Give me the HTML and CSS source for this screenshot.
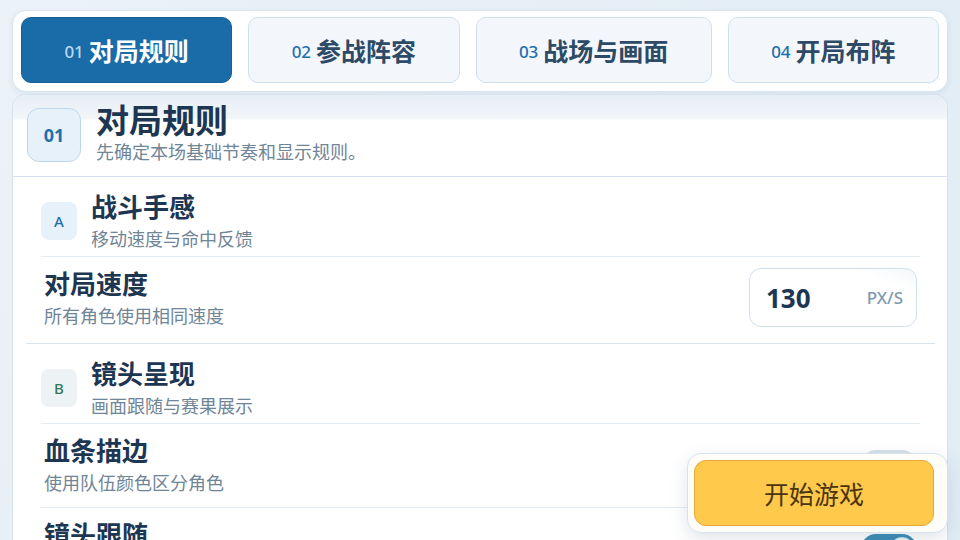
FILE: index.html
```html
<!DOCTYPE html>
<html lang="zh-CN">
<head>
<meta charset="utf-8">
<title>对局设置</title>
<link rel="stylesheet" href="styles.css">
</head>
<body>
<nav class="tabs">
  <a class="tab is-active"><span class="tab-num">01</span><span class="tab-label">对局规则</span></a>
  <a class="tab"><span class="tab-num">02</span><span class="tab-label">参战阵容</span></a>
  <a class="tab"><span class="tab-num">03</span><span class="tab-label">战场与画面</span></a>
  <a class="tab"><span class="tab-num">04</span><span class="tab-label">开局布阵</span></a>
</nav>

<main class="panel">
  <header class="panel-head">
    <div class="step-badge">01</div>
    <div class="head-text">
      <h1 class="panel-title">对局规则</h1>
      <p class="panel-sub">先确定本场基础节奏和显示规则。</p>
    </div>
  </header>

  <div class="panel-body">
    <section class="group">
      <div class="group-head">
        <div class="group-badge group-badge--blue">A</div>
        <div class="text-block">
          <h2 class="label">战斗手感</h2>
          <p class="hint">移动速度与命中反馈</p>
        </div>
      </div>
      <div class="row">
        <div class="text-block">
          <h3 class="label">对局速度</h3>
          <p class="hint">所有角色使用相同速度</p>
        </div>
        <div class="num-field"><span class="num-value">130</span><span class="num-unit">PX/S</span></div>
      </div>
    </section>

    <section class="group">
      <div class="group-head">
        <div class="group-badge group-badge--green">B</div>
        <div class="text-block">
          <h2 class="label">镜头呈现</h2>
          <p class="hint">画面跟随与赛果展示</p>
        </div>
      </div>
      <div class="row">
        <div class="text-block">
          <h3 class="label">血条描边</h3>
          <p class="hint">使用队伍颜色区分角色</p>
        </div>
        <span class="switch"><span class="knob"></span></span>
      </div>
      <div class="row">
        <div class="text-block">
          <h3 class="label">镜头跟随</h3>
          <p class="hint">镜头始终跟随当前角色</p>
        </div>
        <span class="switch is-on"><span class="knob"></span></span>
      </div>
    </section>
  </div>
</main>

<div class="start-dock">
  <button class="start-btn" type="button">开始游戏</button>
</div>
</body>
</html>
```

FILE: styles.css
```css
* { box-sizing: border-box; }

html, body { height: 540px; overflow: hidden; }

body {
  margin: 0;
  padding: 10px 12px 0;
  background: linear-gradient(120deg, #ebf2f8 0%, #e4eef6 60%, #e1ecf5 100%);
  font-family: "Noto Sans", "Noto Sans CJK SC", sans-serif;
  color: #1d3652;
}

h1, h2, h3, p { margin: 0; }

/* ---------- tabs ---------- */
.tabs {
  display: flex;
  gap: 16px;
  padding: 6px 8px 8px;
  background: #fff;
  border: 1px solid #d8e5ef;
  border-radius: 14px;
  box-shadow: 0 2px 6px rgba(40, 80, 120, 0.08);
}

.tab {
  flex: 1 1 auto;
  height: 66px;
  display: flex;
  align-items: center;
  justify-content: center;
  gap: 5px;
  border: 1px solid #cde0ef;
  border-radius: 10px;
  background: #f3f7fb;
  color: #2d4a66;
}

.tab-num {
  font-size: 17px;
  font-weight: 500;
  color: #1f6fae;
  padding-top: 3px;
}

.tab-label {
  font-size: 25px;
  font-weight: 700;
}

.tab.is-active {
  background: #1a6ca8;
  border-color: #195f94;
  color: #fff;
}

.tab.is-active .tab-num { color: #b9d8f0; }

/* ---------- panel ---------- */
.panel {
  margin-top: 2px;
  background: #fff;
  border: 1px solid #d5e3ee;
  border-bottom: 0;
  border-radius: 14px 14px 0 0;
  overflow: hidden;
}

.panel-head {
  display: flex;
  align-items: center;
  gap: 15px;
  padding: 13px 15px 14px 14px;
  border-bottom: 1px solid #d3e2ee;
  background: linear-gradient(180deg, #e7eef4 0px, #f2f6f9 24px, #ffffff 25px);
}

.step-badge {
  width: 54px;
  height: 54px;
  flex: none;
  display: flex;
  align-items: center;
  justify-content: center;
  border: 1px solid #bcd7ec;
  border-radius: 12px;
  background: #e7f1fa;
  color: #1f6fae;
  font-size: 18px;
  font-weight: 700;
}

.panel-title {
  font-size: 33px;
  line-height: 26px;
  font-weight: 700;
  color: #1d3652;
}

.panel-sub {
  margin-top: 8px;
  font-size: 18px;
  line-height: 20px;
  color: #6f8598;
}

.panel-body { padding: 0 12px 0 13px; }

.group {
  padding: 0 15px 3px;
  border-bottom: 1px solid #d9e5ee;
}

.group-head {
  display: flex;
  align-items: center;
  gap: 14px;
  padding: 13px 0 5px;
}

.group-badge {
  width: 36px;
  height: 38px;
  flex: none;
  display: flex;
  align-items: center;
  justify-content: center;
  border-radius: 8px;
  font-size: 15px;
  font-weight: 500;
}

.group-badge--blue { background: #e7f1fa; color: #1f6fae; }
.group-badge--green { background: #edf2f5; color: #2f7a57; }

.label {
  font-size: 26px;
  line-height: 34px;
  font-weight: 700;
  color: #1d3652;
}

.hint {
  margin-top: 3px;
  font-size: 18px;
  line-height: 24px;
  color: #6f8598;
}

.row {
  display: flex;
  align-items: center;
  justify-content: space-between;
  padding: 10px 3px 12px;
  border-top: 1px solid #e2ebf2;
}

.num-field {
  width: 168px;
  height: 59px;
  display: flex;
  align-items: center;
  justify-content: space-between;
  padding: 0 13px 0 16px;
  border: 1px solid #cfe0ee;
  border-radius: 12px;
  background: linear-gradient(200deg, #f3f6f9 0%, #ffffff 20%);
}

.num-value {
  font-size: 26px;
  font-weight: 700;
  color: #1d3652;
}

.num-unit {
  font-size: 17px;
  font-weight: 500;
  color: #7e9ab0;
}

.switch {
  position: relative;
  width: 56px;
  height: 30px;
  border-radius: 15px;
  background: #d6e0e8;
  flex: none;
}

.switch .knob {
  position: absolute;
  top: 3px;
  left: 3px;
  width: 24px;
  height: 24px;
  border-radius: 50%;
  background: #fff;
}

.switch.is-on { background: #3b8db6; }
.switch.is-on .knob { left: 29px; border: 2px solid #d8ecf5; }

/* ---------- start dock ---------- */
.start-dock {
  position: fixed;
  right: 12px;
  bottom: 7px;
  padding: 6px 13px 6px 6px;
  background: #fffdf8;
  border: 1px solid #d5e3ee;
  border-radius: 14px;
  box-shadow: 0 6px 18px rgba(60, 90, 120, 0.16);
}

.start-btn {
  display: block;
  width: 240px;
  height: 66px;
  border: 1px solid #e6a836;
  border-radius: 12px;
  background: #ffc94b;
  color: #4a3510;
  font-family: "Noto Sans", "Noto Sans CJK SC", sans-serif;
  font-size: 25px;
  font-weight: 400;
}
```
